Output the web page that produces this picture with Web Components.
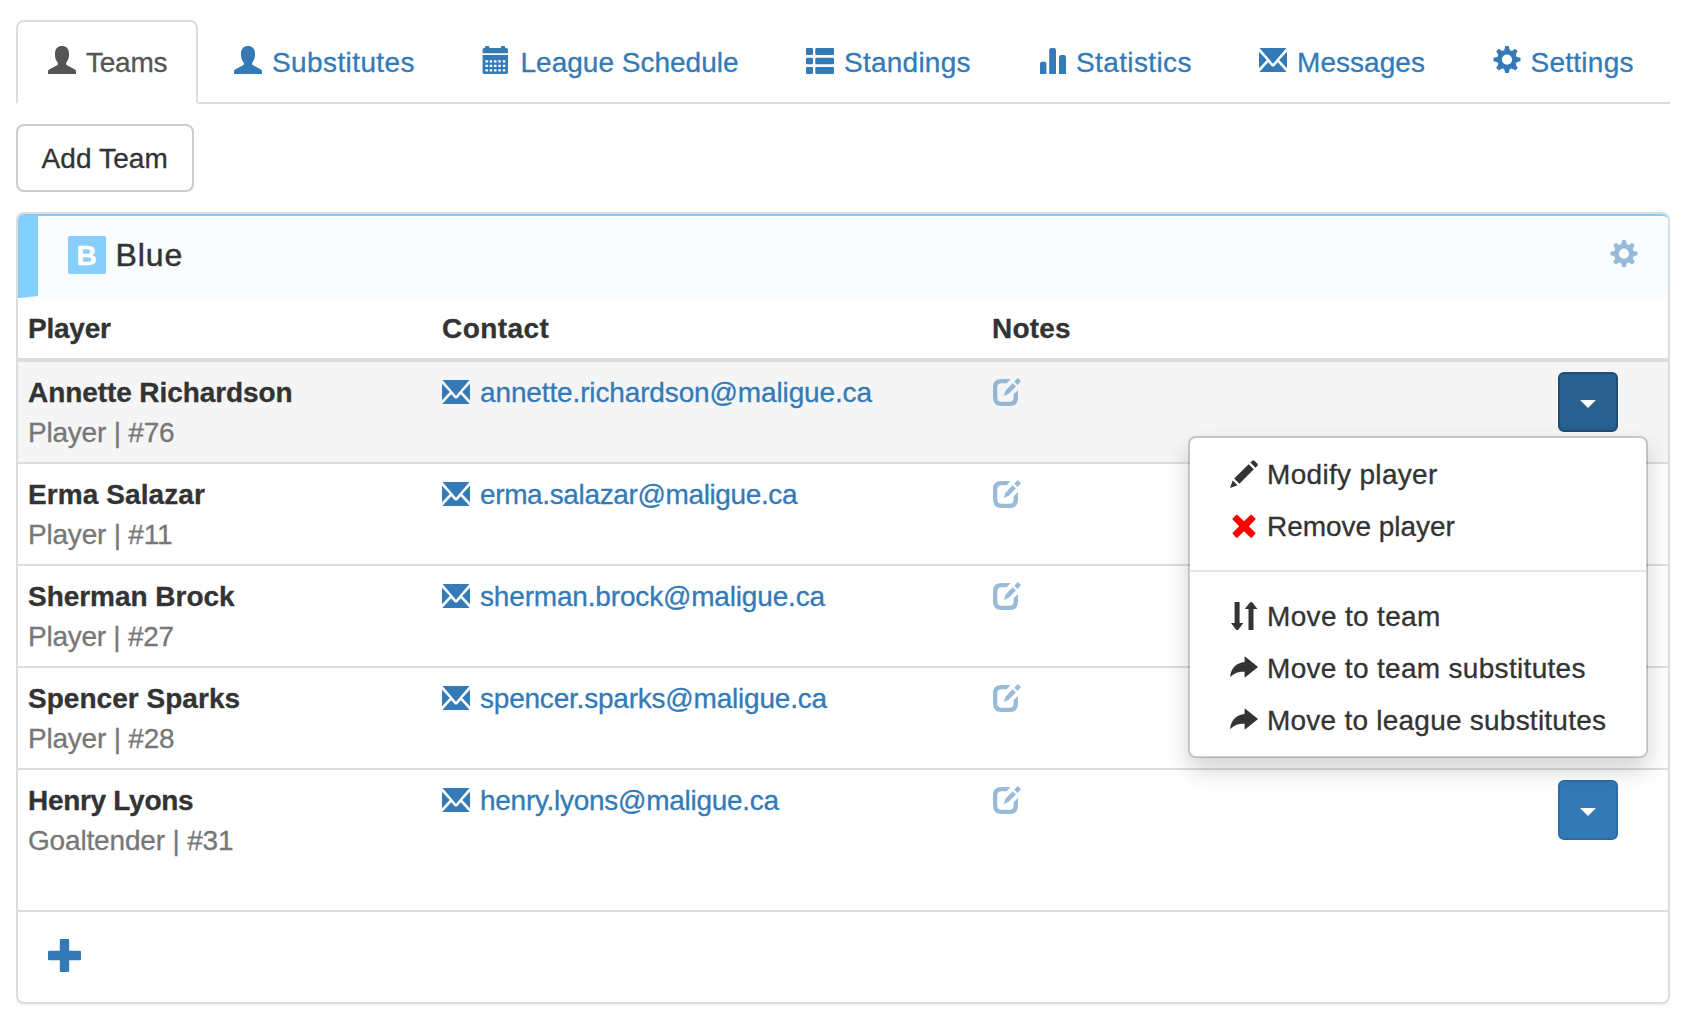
<!DOCTYPE html>
<html lang="en">
<head>
<meta charset="utf-8">
<title>League teams</title>
<style>
body{margin:0;background:#fff;color:#333;font:28px/40px "Liberation Sans",Arial,sans-serif}
</style>
</head>
<body>
<league-page></league-page>
<script>
const GLYPHS = {
  user: '<path d="M14 0C18.200 0 21 2.600 21 7.500V9.200C21 12 19.900 14.500 18.500 16.200C17.900 17 18 18.800 19 19.300L26.500 23.200C27.500 23.700 28 24.500 28 25.600V28H0V25.600C0 24.500 .5 23.700 1.500 23.200L9 19.300C10 18.800 10.100 17 9.500 16.200C8.100 14.500 7 12 7 9.200V7.500C7 2.600 9.800 0 14 0Z"/>',
  calendar: '<path fill-rule="evenodd" d="M.6 7.200V3.600Q.6 2 2.200 2H3V1.400Q3 0 4.400 0H6Q7.400 0 7.400 1.400V2H18.800V1.400Q18.800 0 20.200 0H21.800Q23.200 0 23.200 1.400V2H24.400Q26 2 26 3.600V7.200ZM.6 9H26V26.600Q26 28 24.600 28H2Q.6 28 .6 26.600ZM3.400 14.200V16.500H5.900V14.200ZM7.700 14.200V16.500H10.200V14.200ZM12 14.200V16.500H14.500V14.200ZM16.300 14.200V16.500H18.800V14.200ZM20.800 14.200V16.500H23.300V14.200ZM3.400 18.700V21H5.900V18.700ZM7.700 18.700V21H10.200V18.700ZM12 18.700V21H14.500V18.700ZM16.300 18.700V21H18.800V18.700ZM20.800 18.700V21H23.300V18.700ZM3.400 23.200V25.500H5.900V23.200ZM7.700 23.200V25.500H10.200V23.200ZM12 23.200V25.500H14.500V23.200ZM16.300 23.200V25.500H18.800V23.200ZM20.800 23.200V25.500H23.300V23.200Z"/>',
  list: '<rect x="0" y="2" width="7" height="7" rx="1"/><rect x="9.300" y="2" width="18.700" height="7" rx="1"/><rect x="0" y="11.700" width="7" height="6.600" rx="1"/><rect x="9.300" y="11.700" width="18.700" height="6.600" rx="1"/><rect x="0" y="21" width="7" height="7" rx="1"/><rect x="9.300" y="21" width="18.700" height="7" rx="1"/>',
  stats: '<path d="M2 28V17.800Q2 15.800 4 15.800H6.400Q8.400 15.800 8.400 17.800V28ZM11.200 28V4.200Q11.200 2 13.400 2H15.800Q18 2 18 4.200V28ZM21 28V11.200Q21 9 23.200 9H25.800Q28 9 28 11.200V28Z"/>',
  envelope: '<path d="M.5 2H27.500L16.300 15L14.300 17.600H13.700L11.700 15ZM0 5.800L7.800 14L0 22.200ZM28 5.800V22.200L20.200 14ZM9.200 16.200L12.500 19.900Q14 21.300 15.500 19.900L18.800 16.200L27.700 26H.3Z"/>',
  cog: '<g transform="translate(14 13.600)"><path fill-rule="evenodd" d="M9.700 0A9.700 9.700 0 1 0-9.700 0A9.700 9.700 0 1 0 9.700 0ZM5.100 0A5.100 5.100 0 1 1-5.100 0A5.100 5.100 0 1 1 5.100 0Z"/>' +
    [0, 45, 90, 135, 180, 225, 270, 315].map(a => `<path transform="rotate(${a})" d="M-3.700-8.800Q-2-10-2-12.600Q-2-13.500-1.200-13.500H1.200Q2-13.500 2-12.600Q2-10 3.700-8.800Z"/>`).join('') + '</g>',
  edit: '<path d="M18.500 1H9.500Q1 1 1 9V19.500Q1 28 9.500 28H18Q26 28 26 19.500V12L21.600 16.300V19.500Q21.600 23.700 17.500 23.700H9.700Q5.300 23.700 5.300 19.500V9.500Q5.300 5.300 9.700 5.300H14.800Z"/><path d="M20.700 5.200L23.900 8.400L16.700 15.700L11.600 18.300L13.600 12.500ZM22.300 3.700L25 .7Q25.700 0 26.500 .6L28.400 2.600Q29 3.400 28.300 4.100L25.500 6.900Z"/>',
  pencil: '<path d="M0 28L2.700 20.400L7.600 25.300ZM4.200 18.600L18.700 4.200L23.800 9.300L9.400 23.700ZM20.400 2.600L22.300 .7Q23.300-.4 24.400 .7L27.400 3.700Q28.500 4.800 27.400 5.800L25.500 7.700Z"/>',
  remove: '<path d="M7.500 3L14 9.200L20.500 3Q21.200 2.400 21.900 3L25.200 6.300Q25.800 7 25.200 7.700L18.900 14.200L25.200 20.700Q25.800 21.400 25.200 22.100L21.900 25.400Q21.200 26 20.500 25.400L14 19.200L7.500 25.400Q6.800 26 6.100 25.400L2.800 22.100Q2.200 21.400 2.800 20.700L9.100 14.200L2.800 7.700Q2.200 7 2.800 6.300L6.100 3Q6.800 2.400 7.500 3Z"/>',
  sort: '<path d="M4.600 0H9.600V21H13.300L8.500 27.500Q7.200 28.500 5.900 27.500L1 21H4.600ZM18.500 28H23.500V7H27.400L22.400 .5Q21.100-.5 19.800 .5L14.800 7H18.500Z"/>',
  share: '<path d="M14.600 2.200L27.800 12.700Q28 13 27.800 13.300L14.600 23.800V17.700C8 17.200 3.800 19.400 .2 23.200C.5 14.500 6.500 8.800 14.600 8.100Z"/>',
  plus: '<path d="M11 0H17Q18 0 18 1V10H27Q28 10 28 11V17Q28 18 27 18H18V27Q18 28 17 28H11Q10 28 10 27V18H1Q0 18 0 17V11Q0 10 1 10H10V1Q10 0 11 0Z"/>'
};

class UiElement extends HTMLElement {
  render(html) {
    if (!this.shadowRoot) this.attachShadow({ mode: 'open' });
    this.shadowRoot.innerHTML = html;
  }
  attr(name, fallback = '') { return this.getAttribute(name) ?? fallback; }
}

customElements.define('glyph-icon', class extends UiElement {
  connectedCallback() {
    this.render(`<style>:host{display:block;flex:none;width:28px;height:28px}svg{display:block;width:100%;height:100%;overflow:visible;fill:currentColor}</style>
      <svg viewBox="0 0 28 28" aria-hidden="true">${GLYPHS[this.attr('name')]}</svg>`);
  }
});

/* A single line of text whose tracking is set from its intended ink width. */
customElements.define('set-text', class extends UiElement {
  connectedCallback() {
    this.render('<style>:host{display:block;width:max-content;white-space:nowrap;-webkit-text-stroke:.3px currentColor}</style><slot></slot>');
    const text = this.textContent, ink = parseFloat(this.attr('ink'));
    if (!ink || text.length < 2) return;
    const s = getComputedStyle(this), c = document.createElement('canvas').getContext('2d');
    c.font = `${s.fontWeight} ${s.fontSize} ${s.fontFamily}`;
    const m = c.measureText(text);
    const natural = m.actualBoundingBoxLeft + m.actualBoundingBoxRight;
    this.style.letterSpacing = ((ink - natural) / (text.length - 1)).toFixed(3) + 'px';
  }
});

customElements.define('nav-tab', class extends UiElement {
  connectedCallback() {
    this.render(`<style>
      :host{display:flex;box-sizing:content-box;width:${this.attr('span')}px;padding:20px 30px;border:2px solid transparent;border-radius:8px 8px 0 0;margin-bottom:-2px;color:#337ab7}
      :host([active]){color:#555;background:#fff;border-color:#ddd #ddd transparent}
      glyph-icon{margin:4px ${this.attr('gap', '10')}px 0 0}
      set-text{padding-top:1px;margin-bottom:-1px}
      </style><glyph-icon name="${this.attr('icon')}"></glyph-icon><set-text ink="${this.attr('ink')}">${this.attr('label')}</set-text>`);
  }
});

customElements.define('tab-bar', class extends UiElement {
  connectedCallback() {
    this.render('<style>:host{display:flex;gap:4px;border-bottom:2px solid #ddd}</style><slot></slot>');
  }
});

customElements.define('plain-button', class extends UiElement {
  connectedCallback() {
    this.render(`<style>:host{display:block}button{display:block;box-sizing:border-box;width:178px;height:68px;padding:13px 0 11px 23.500px;border:2px solid #ccc;border-radius:8px;background:#fff;color:#333;font:inherit;text-align:left}</style>
      <button><slot></slot></button>`);
  }
});

customElements.define('caret-button', class extends UiElement {
  connectedCallback() {
    this.render(`<style>
      :host{display:block}
      button{display:flex;align-items:center;justify-content:center;box-sizing:border-box;width:60px;height:60px;padding:4px 0 0;background:#337ab7;border:2px solid #2e6da4;border-radius:6px}
      :host([open]) button{background:#286090;border-color:#204d74}
      i{border:8px solid transparent;border-top-color:#fff;border-bottom:0}
      </style><button aria-label="Player actions"><i></i></button>`);
  }
});

customElements.define('menu-item', class extends UiElement {
  connectedCallback() {
    this.render(`<style>:host{display:flex;padding:6px 40px}glyph-icon{margin:6px 9px 0 0;color:${this.attr('tint', '#333')}}set-text{padding-top:1px;margin-bottom:-1px}</style>
      <glyph-icon name="${this.attr('icon')}"></glyph-icon><set-text ink="${this.attr('ink')}">${this.attr('label')}</set-text>`);
  }
});

customElements.define('player-menu', class extends UiElement {
  connectedCallback() {
    this.render(`<style>
      :host{display:block;box-sizing:border-box;width:460px;padding:10px 0;background:#fff;background-clip:padding-box;border:2px solid rgba(0,0,0,.18);border-radius:8px;box-shadow:0 12px 24px rgba(0,0,0,.175)}
      hr{height:2px;margin:18px 0;border:0;background:#e5e5e5}
      </style>
      <menu-item icon="pencil" label="Modify player" ink="168"></menu-item>
      <menu-item icon="remove" label="Remove player" ink="185.500" tint="#f00"></menu-item>
      <hr>
      <menu-item icon="sort" label="Move to team" ink="170"></menu-item>
      <menu-item icon="share" label="Move to team substitutes" ink="315.500"></menu-item>
      <menu-item icon="share" label="Move to league substitutes" ink="336"></menu-item>`);
  }
});

customElements.define('player-row', class extends UiElement {
  connectedCallback() {
    const open = this.hasAttribute('open');
    this.render(`<style>
      :host{display:grid;grid-template-columns:414px 550px 1fr auto;align-items:start;box-sizing:border-box;min-height:102px;padding:10px 50px 10px 10px;border-bottom:2px solid #ddd}
      :host([open]){background:#f5f5f5}
      :host([last]){min-height:142px}
      set-text{padding-top:1px;margin-bottom:-1px}
      .name{font-weight:bold}
      .role{color:#777}
      .mail{display:flex;color:#337ab7}
      .mail glyph-icon{margin:6px 10px 0 0}
      .note{margin-top:6px;color:#337ab7;opacity:.5}
      .action{position:relative}
      player-menu{position:absolute;top:64px;right:-30px;z-index:2}
      </style>
      <div><set-text class="name" ink="${this.attr('name-ink')}">${this.attr('name')}</set-text><set-text class="role" ink="${this.attr('role-ink')}">${this.attr('position')}</set-text></div>
      <div class="mail"><glyph-icon name="envelope"></glyph-icon><set-text ink="${this.attr('mail-ink')}">${this.attr('mail')}</set-text></div>
      <glyph-icon class="note" name="edit"></glyph-icon>
      <div class="action"><caret-button ${open ? 'open' : ''}></caret-button>${open ? '<player-menu></player-menu>' : ''}</div>`);
  }
});

customElements.define('team-header', class extends UiElement {
  connectedCallback() {
    this.render(`<style>
      :host{display:flex;align-items:flex-start;box-sizing:border-box;height:84px;padding:20px 30px;background:#f9fdff;border:solid #80cfff;border-width:2px 0 2px 20px;border-bottom-color:#f9fdff;border-radius:6px 6px 0 0}
      b{width:37px;height:38px;padding-right:1px;border-radius:2px;background:#87cefa;color:#fff;font-size:28px;line-height:40px;text-align:center;-webkit-text-stroke:.5px #fff}
      set-text{margin:-1px 0 0 9.500px;font-size:32px;-webkit-text-stroke:.5px currentColor}
      glyph-icon{margin:4px 0 0 auto;color:#337ab7;opacity:.5}
      </style><b>B</b><set-text ink="64">Blue</set-text><glyph-icon name="cog"></glyph-icon>`);
  }
});

customElements.define('team-panel', class extends UiElement {
  connectedCallback() {
    this.render(`<style>
      :host{display:block;border:2px solid #ddd;border-radius:8px;background:#fff;box-shadow:0 2px 2px rgba(0,0,0,.05)}
      .head{display:grid;grid-template-columns:414px 550px 1fr;padding:10px;border-bottom:4px solid #ddd;font-weight:bold}
      .head set-text{padding-top:1px;margin-bottom:-1px}
      footer{height:90px;box-sizing:border-box;padding:27px 30px}
      footer glyph-icon{width:33px;height:33px;color:#337ab7}
      </style>
      <team-header></team-header>
      <div class="head"><set-text ink="82">Player</set-text><set-text ink="105.500">Contact</set-text><set-text ink="77">Notes</set-text></div>
      <slot></slot>
      <footer><glyph-icon name="plus"></glyph-icon></footer>`);
  }
});

customElements.define('league-page', class extends UiElement {
  connectedCallback() {
    this.render(`<style>
      :host{display:flex;flex-direction:column;gap:20px;box-sizing:border-box;width:1692px;height:1026px;padding:20px 22px 20px 16px;overflow:hidden}
      </style>
      <tab-bar>
        <nav-tab active icon="user" label="Teams" span="118" ink="80.500"></nav-tab>
        <nav-tab icon="user" label="Substitutes" span="179.500" ink="140.500"></nav-tab>
        <nav-tab icon="calendar" label="League Schedule" span="256.500" gap="11" ink="215.500"></nav-tab>
        <nav-tab icon="list" label="Standings" span="164" ink="124.500"></nav-tab>
        <nav-tab icon="stats" label="Statistics" span="153" ink="113.500"></nav-tab>
        <nav-tab icon="envelope" label="Messages" span="166" ink="125"></nav-tab>
        <nav-tab icon="cog" label="Settings" span="141" gap="9.500" ink="101"></nav-tab>
      </tab-bar>
      <plain-button><set-text ink="125.500">Add Team</set-text></plain-button>
      <team-panel>
        <player-row open name="Annette Richardson" name-ink="263.500" position="Player | #76" role-ink="144" mail="annette.richardson@maligue.ca" mail-ink="391.500"></player-row>
        <player-row name="Erma Salazar" name-ink="176" position="Player | #11" role-ink="142" mail="erma.salazar@maligue.ca" mail-ink="317"></player-row>
        <player-row name="Sherman Brock" name-ink="207" position="Player | #27" role-ink="143.500" mail="sherman.brock@maligue.ca" mail-ink="345.500"></player-row>
        <player-row name="Spencer Sparks" name-ink="211.500" position="Player | #28" role-ink="144" mail="spencer.sparks@maligue.ca" mail-ink="347.500"></player-row>
        <player-row last name="Henry Lyons" name-ink="164" position="Goaltender | #31" role-ink="204" mail="henry.lyons@maligue.ca" mail-ink="298.500"></player-row>
      </team-panel>`);
  }
});
</script>
</body>
</html>
